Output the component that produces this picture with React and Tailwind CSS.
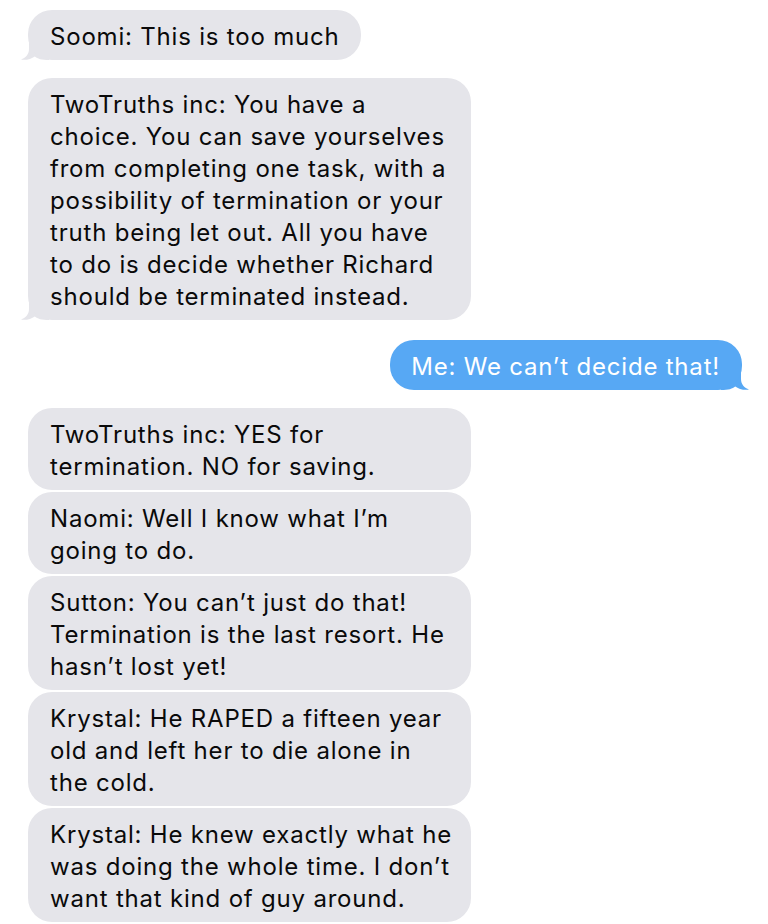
import React from 'react';

const GRAY = 'bg-[#e5e5ea]';
const BLUE = 'bg-[#57a8f4]';

const TailLeft = () => (
  <svg className="absolute -left-[7px] bottom-0" width="28" height="24" viewBox="0 0 28 24">
    <path d="M8 0 L8 13 C8 18.5 4.5 21.8 0 23.6 C5.5 24.4 10.5 22.8 13.8 20.4 C16.5 22.6 20.5 24 28 24 L28 0 Z" fill="#e5e5ea" />
  </svg>
);

const TailRight = () => (
  <svg className="absolute -right-[7px] bottom-0 -scale-x-100" width="28" height="24" viewBox="0 0 28 24">
    <path d="M8 0 L8 13 C8 18.5 4.5 21.8 0 23.6 C5.5 24.4 10.5 22.8 13.8 20.4 C16.5 22.6 20.5 24 28 24 L28 0 Z" fill="#57a8f4" />
  </svg>
);

const Lines = ({ lines }) => (
  <div>
    {lines.map((l, i) => (
      <div key={i} className="whitespace-nowrap">{l || '\u00a0'}</div>
    ))}
  </div>
);

const Received = ({ lines, tail, wide }) => (
  <div className={`relative self-start shrink-0 ${wide ? 'w-[443px]' : ''}`}>
    {tail && <TailLeft />}
    <div className={`relative ${GRAY} rounded-[24px] pl-[22px] pr-[21px] pt-[11px] pb-[7px] text-[#0a0a0a]`}>
      <Lines lines={lines} />
    </div>
  </div>
);

const Sent = ({ lines }) => (
  <div className="relative self-end shrink-0">
    <TailRight />
    <div className={`relative ${BLUE} rounded-[24px] pl-[21px] pr-[22px] pt-[11px] pb-[7px] text-white`}>
      <Lines lines={lines} />
    </div>
  </div>
);

export default function App() {
  return (
    <div
      className="w-[768px] h-[924px] overflow-hidden bg-white pl-[28px] pr-[26px] pt-[10px] text-[24px] leading-[32px] tracking-[0.8px] flex flex-col"
      style={{ fontFamily: 'Inter, "Noto Sans", sans-serif' }}
    >
      <Received tail lines={['Soomi: This is too much']} />
      <div className="h-[18px] shrink-0" />
      <Received
        tail
        wide
        lines={[
          'TwoTruths inc: You have a',
          'choice. You can save yourselves',
          'from completing one task, with a',
          'possibility of termination or your',
          'truth being let out. All you have',
          'to do is decide whether Richard',
          'should be terminated instead.',
        ]}
      />
      <div className="h-[20px] shrink-0" />
      <Sent lines={['Me: We can\u2019t decide that!']} />
      <div className="h-[18px] shrink-0" />
      <div className="flex flex-col gap-[2px] shrink-0">
        <Received wide lines={['TwoTruths inc: YES for', 'termination. NO for saving.']} />
        <Received wide lines={['Naomi: Well I know what I\u2019m', 'going to do.']} />
        <Received
          wide
          lines={['Sutton: You can\u2019t just do that!', 'Termination is the last resort. He', 'hasn\u2019t lost yet!']}
        />
        <Received
          wide
          lines={['Krystal: He RAPED a fifteen year', 'old and left her to die alone in', 'the cold.']}
        />
        <Received
          wide
          lines={['Krystal: He knew exactly what he', 'was doing the whole time. I don\u2019t', 'want that kind of guy around.']}
        />
        <Received wide lines={['', '']} />
      </div>
    </div>
  );
}
